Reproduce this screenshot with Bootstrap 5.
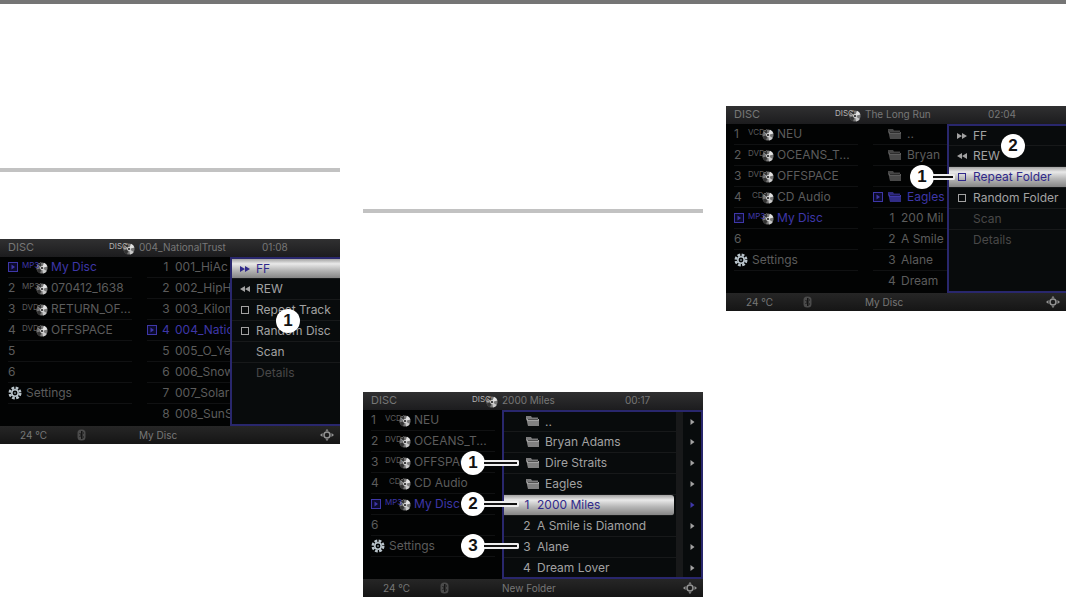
<!DOCTYPE html>
<html lang="en">
<head>
<meta charset="utf-8">
<meta name="viewport" content="width=device-width, initial-scale=1">
<title>Disc mode</title>
<link rel="stylesheet" href="https://cdn.jsdelivr.net/npm/bootstrap@5.3.0/dist/css/bootstrap.min.css">
<style>
body{background:#fff;font-family:Inter,"Liberation Sans",sans-serif;font-size:12px;line-height:20px}
.topbar{height:4px;background:#757575}
.sheet{display:grid;grid-template-columns:repeat(3,minmax(0,1fr));column-gap:23px;align-items:start}
.rule{height:4px;background:#c2c2c2;border:0;opacity:1;margin:0}
.c1{padding-top:164px}.c1 .rule{margin-bottom:67px}
.c2{padding-top:205px}.c2 .rule{margin-bottom:179px}
.c3{padding-top:102px}
.unit{background:#020303;color:#5c5c5c;position:relative}
.bar{display:grid;grid-template-columns:109px 30px 123px 1fr;height:18px;line-height:16px;font-size:11px;color:#777;background:linear-gradient(#303031,#1c1c1e)}
.foot{grid-template-columns:77px 62px 1fr 20px;background:linear-gradient(#262626,#151515);line-height:18px;font-size:10px;align-items:center}
.bar .ttl{font-size:10px}
.foot svg,.bar svg,.tracks svg{display:block}
.tracks{list-style:none;margin:0;padding:0}
.tracks li{height:21px;display:flex;align-items:center;white-space:nowrap;border-bottom:1px solid #101112}
.tracks li:last-child{border-bottom-color:transparent}
.left-list{flex:0 0 124px;margin:0 7px 0 8px}
.left-list .n{width:14px;flex:none}
.mid-list{flex:1;min-width:0;overflow:hidden;margin-left:8px}
.mid-list .p{width:11px;flex:none}.mid-list .n{width:16px;flex:none;text-align:center}
.mid-list .t{padding-left:1px}
.mid-list .dir .n{width:22px;padding-left:4px}
.on{color:#3e37a8}
.kind{font-size:8px;width:14px;flex:none;line-height:8px;padding-bottom:5px;position:relative;z-index:1}
.bar .kind{color:#b4b4b4}
.kind.cd{padding-left:4px}
.kind + svg{margin:2px 3px 0 0;flex:none}
.panel{border:solid #29276d;border-width:2px 0 2px 2px;background:#080b0c;color:#a2a2a2;height:169px;flex:none}
.panel.w1{width:110px}.panel.w3{width:119px}
.panel li{padding-left:8px;border-bottom-color:#17191a}
.panel li:first-child{height:20px}.panel li:last-child{border-color:transparent}
.panel button,.panel label{display:flex;align-items:center;border:0;padding:0;background:none;color:inherit;white-space:nowrap}
.panel li>button>svg,.gap16{width:10px;margin:0 6px 0 0;flex:none}
.panel input{appearance:none;width:8px;height:8px;border:1px solid;color:inherit;margin:0 7px 0 1px;background:none;flex:none}
.panel li.hot{background:linear-gradient(#a2a2a2,#e9e9e9 25%,#b5b5b5 60%,#858585);color:#30298a}
.panel li.off{color:#484848}
.browser{flex:1;min-width:0;border-right-width:2px;display:flex}
.browser .tracks{flex:1;min-width:0}
.browser .tracks li{padding-left:13px}
.browser .n{width:20px;text-align:center}
.browser .tracks .dir{padding-left:22px}.browser .dir svg{margin-right:6px}
.browser .hot{border-radius:0 3px 3px 0;margin-right:2px}
.browser .tracks.more{flex:0 0 25px;border-left:7px solid #18191a}
.browser .tracks.more li{padding:0;justify-content:center;border-color:transparent}
.tag{position:absolute;display:flex;align-items:center;height:24px}
.tag b{width:24px;height:24px;border-radius:50%;background:#fff;color:#111;font:bold 17px/24px "Liberation Sans",sans-serif;text-align:center}
.tag i{height:6px;background:#111;border:solid #eee;border-width:2px 2px 2px 0;border-radius:0 2px 2px 0;width:35px;margin-left:-1px}
.tag i.short-line{width:22px}
</style>
</head>
<body>
<svg width="0" height="0" class="position-absolute" aria-hidden="true">
<defs>
<symbol id="disc" viewBox="0 0 12 12"><circle cx="6" cy="6" r="5.6" fill="#777"/><path d="M6 6L1.2 3A5.6 5.6 0 0 1 5 .5zM6 6l4.8 3A5.6 5.6 0 0 1 7 11.500z" fill="#c9c9c9"/><path d="M6 6L.6 7.500A5.600 5.600 0 0 0 4 11.200zM6 6L1.500 2.500 5 .5z" fill="#333"/><path d="M6 6l5.400-1.500A5.600 5.600 0 0 0 8 .8z" fill="#e2e2e2"/><circle cx="6" cy="6" r="1.900" fill="#ddd"/><circle cx="6" cy="6" r="1" fill="#111"/></symbol>
<symbol id="play" viewBox="0 0 10 10"><rect x=".5" y=".5" width="9" height="9" fill="#0c0b2b" stroke="currentColor"/><path d="M3.500 2.500v5L7 5z" fill="currentColor"/></symbol>
<symbol id="folder" viewBox="0 0 13 11"><path d="M0 0h5l1 1.500h6v2H0z" fill="currentColor" opacity=".75"/><path d="M1 3h12v7H2L0 1z" fill="currentColor"/><path d="M2 3.500h10" stroke="#000" opacity=".5"/><path d="M2 10L1 5h12v5z" fill="#000" opacity=".2"/></symbol>
<symbol id="gear" viewBox="0 0 14 14"><circle cx="7" cy="7" r="5.200" fill="none" stroke="#b9c4cb" stroke-width="2.600" stroke-dasharray="2.700 1.384"/><circle cx="7" cy="7" r="3.200" fill="none" stroke="#b9c4cb" stroke-width="1.600"/><circle cx="7" cy="7" r="1" fill="#75828a"/></symbol>
<symbol id="ff" viewBox="0 0 10 10"><path d="M0 2v6L5 5zM5 2v6L10 5z" fill="currentColor"/></symbol>
<symbol id="rew" viewBox="0 0 10 10"><path d="M10 2v6L5 5zM5 2v6L0 5z" fill="currentColor"/></symbol>
<symbol id="next" viewBox="0 0 5 8"><path d="M.5 1v6L4.500 4z" fill="currentColor"/></symbol>
<symbol id="bt" viewBox="0 0 9 12"><rect x=".5" y=".5" width="8" height="11" rx="3.500" fill="#4b4b4b"/><path d="M2.500 4l4 4-2 2V2l2 2-4 4" fill="none" stroke="#151515"/></symbol>
<symbol id="joy" viewBox="0 0 14 12"><circle cx="7" cy="6" r="3" fill="none" stroke="#959595" stroke-width="1.500"/><path d="M5.500 1.800L7 0l1.500 1.800zM5.500 10.200L7 12l1.500-1.800zM2.500 4v4L0 6zM11.500 4v4L14 6z" fill="#959595"/></symbol>
</defs></svg>
<header class="topbar"></header>
<main class="sheet">
<section class="c1"><hr class="rule">
<div class="unit">
<div class="bar"><span class="ps-2">DISC</span><span class="d-flex align-items-center"><span class="kind">DISC</span><svg width="12" height="12"><use href="#disc"/></svg></span><span class="ttl">004_NationalTrust</span><span class="ttl">01:08</span></div>
<div class="d-flex">
<ul class="tracks left-list">
<li class="on"><span class="n"><svg width="10" height="10"><use href="#play"/></svg></span><span class="kind">MP3</span><svg width="12" height="12"><use href="#disc"/></svg>My Disc</li>
<li><span class="n">2</span><span class="kind">MP3</span><svg width="12" height="12"><use href="#disc"/></svg>070412_1638</li>
<li><span class="n">3</span><span class="kind">DVD</span><svg width="12" height="12"><use href="#disc"/></svg>RETURN_OF...</li>
<li><span class="n">4</span><span class="kind">DVD</span><svg width="12" height="12"><use href="#disc"/></svg>OFFSPACE</li>
<li><span class="n">5</span></li><li><span class="n">6</span></li>
<li><svg class="me-1" width="14" height="14"><use href="#gear"/></svg>Settings</li><li></li>
</ul>
<ul class="tracks mid-list">
<li><span class="p"></span><span class="n">1</span><span class="t">001_HiAc</span></li>
<li><span class="p"></span><span class="n">2</span><span class="t">002_HipH</span></li>
<li><span class="p"></span><span class="n">3</span><span class="t">003_Kilom</span></li>
<li class="on"><span class="p"><svg width="10" height="10"><use href="#play"/></svg></span><span class="n">4</span><span class="t">004_Natio</span></li>
<li><span class="p"></span><span class="n">5</span><span class="t">005_O_Ye</span></li>
<li><span class="p"></span><span class="n">6</span><span class="t">006_Snow</span></li>
<li><span class="p"></span><span class="n">7</span><span class="t">007_Solar</span></li>
<li><span class="p"></span><span class="n">8</span><span class="t">008_SunS</span></li>
</ul>
<div class="panel w1"><ul class="tracks">
<li class="hot"><button type="button"><svg width="10" height="10"><use href="#ff"/></svg>FF</button></li>
<li><button type="button"><svg width="10" height="10"><use href="#rew"/></svg>REW</button></li>
<li><label><input type="checkbox">Repeat Track</label></li>
<li><label><input type="checkbox">Random Disc</label></li>
<li><button type="button"><span class="gap16"></span>Scan</button></li>
<li class="off"><button type="button"><span class="gap16"></span>Details</button></li>
</ul></div>
</div>
<div class="bar foot"><span class="ps-3 ms-1">24 ℃</span><svg width="9" height="12"><use href="#bt"/></svg><span>My Disc</span><svg width="14" height="12"><use href="#joy"/></svg></div>
<div class="tag" style="left:276px;top:70px"><b>1</b></div>
</div>
</section>
<section class="c2"><hr class="rule">
<div class="unit">
<div class="bar"><span class="ps-2">DISC</span><span class="d-flex align-items-center"><span class="kind">DISC</span><svg width="12" height="12"><use href="#disc"/></svg></span><span class="ttl">2000 Miles</span><span class="ttl">00:17</span></div>
<div class="d-flex">
<ul class="tracks left-list">
<li><span class="n">1</span><span class="kind">VCD</span><svg width="12" height="12"><use href="#disc"/></svg>NEU</li>
<li><span class="n">2</span><span class="kind">DVD</span><svg width="12" height="12"><use href="#disc"/></svg>OCEANS_T...</li>
<li><span class="n">3</span><span class="kind">DVD</span><svg width="12" height="12"><use href="#disc"/></svg>OFFSPAC</li>
<li><span class="n">4</span><span class="kind cd">CD</span><svg width="12" height="12"><use href="#disc"/></svg>CD Audio</li>
<li class="on"><span class="n"><svg width="10" height="10"><use href="#play"/></svg></span><span class="kind">MP3</span><svg width="12" height="12"><use href="#disc"/></svg>My Disc</li>
<li><span class="n">6</span></li>
<li><svg class="me-1" width="14" height="14"><use href="#gear"/></svg>Settings</li><li></li>
</ul>
<div class="panel browser">
<ul class="tracks">
<li class="dir"><svg width="13" height="11"><use href="#folder"/></svg>..</li>
<li class="dir"><svg width="13" height="11"><use href="#folder"/></svg>Bryan Adams</li>
<li class="dir"><svg width="13" height="11"><use href="#folder"/></svg>Dire Straits</li>
<li class="dir"><svg width="13" height="11"><use href="#folder"/></svg>Eagles</li>
<li class="hot"><span class="n">1</span>2000 Miles</li>
<li><span class="n">2</span>A Smile is Diamond</li>
<li><span class="n">3</span>Alane</li>
<li><span class="n">4</span>Dream Lover</li>
</ul>
<ul class="tracks more">
<li><svg width="5" height="8"><use href="#next"/></svg></li><li><svg width="5" height="8"><use href="#next"/></svg></li><li><svg width="5" height="8"><use href="#next"/></svg></li><li><svg width="5" height="8"><use href="#next"/></svg></li><li class="on"><svg width="5" height="8"><use href="#next"/></svg></li><li><svg width="5" height="8"><use href="#next"/></svg></li><li><svg width="5" height="8"><use href="#next"/></svg></li><li><svg width="5" height="8"><use href="#next"/></svg></li>
</ul>
</div>
</div>
<div class="bar foot"><span class="ps-3 ms-1">24 ℃</span><svg width="9" height="12"><use href="#bt"/></svg><span>New Folder</span><svg width="14" height="12"><use href="#joy"/></svg></div>
<div class="tag" style="left:98px;top:59px"><b>1</b><i></i></div>
<div class="tag" style="left:98px;top:100px"><b>2</b><i></i></div>
<div class="tag" style="left:98px;top:142px"><b>3</b><i></i></div>
</div>
</section>
<section class="c3">
<div class="unit">
<div class="bar"><span class="ps-2">DISC</span><span class="d-flex align-items-center"><span class="kind">DISC</span><svg width="12" height="12"><use href="#disc"/></svg></span><span class="ttl">The Long Run</span><span class="ttl">02:04</span></div>
<div class="d-flex">
<ul class="tracks left-list">
<li><span class="n">1</span><span class="kind">VCD</span><svg width="12" height="12"><use href="#disc"/></svg>NEU</li>
<li><span class="n">2</span><span class="kind">DVD</span><svg width="12" height="12"><use href="#disc"/></svg>OCEANS_T...</li>
<li><span class="n">3</span><span class="kind">DVD</span><svg width="12" height="12"><use href="#disc"/></svg>OFFSPACE</li>
<li><span class="n">4</span><span class="kind cd">CD</span><svg width="12" height="12"><use href="#disc"/></svg>CD Audio</li>
<li class="on"><span class="n"><svg width="10" height="10"><use href="#play"/></svg></span><span class="kind">MP3</span><svg width="12" height="12"><use href="#disc"/></svg>My Disc</li>
<li><span class="n">6</span></li>
<li><svg class="me-1" width="14" height="14"><use href="#gear"/></svg>Settings</li><li></li>
</ul>
<ul class="tracks mid-list">
<li class="dir"><span class="p"></span><span class="n"><svg width="13" height="11"><use href="#folder"/></svg></span><span class="t">..</span></li>
<li class="dir"><span class="p"></span><span class="n"><svg width="13" height="11"><use href="#folder"/></svg></span><span class="t">Bryan</span></li>
<li class="dir"><span class="p"></span><span class="n"><svg width="13" height="11"><use href="#folder"/></svg></span></li>
<li class="dir on"><span class="p"><svg width="10" height="10"><use href="#play"/></svg></span><span class="n"><svg width="13" height="11"><use href="#folder"/></svg></span><span class="t">Eagles</span></li>
<li><span class="p"></span><span class="n">1</span><span class="t">200 Mil</span></li>
<li><span class="p"></span><span class="n">2</span><span class="t">A Smile</span></li>
<li><span class="p"></span><span class="n">3</span><span class="t">Alane</span></li>
<li><span class="p"></span><span class="n">4</span><span class="t">Dream</span></li>
</ul>
<div class="panel w3"><ul class="tracks">
<li><button type="button"><svg width="10" height="10"><use href="#ff"/></svg>FF</button></li>
<li><button type="button"><svg width="10" height="10"><use href="#rew"/></svg>REW</button></li>
<li class="hot"><label><input type="checkbox">Repeat Folder</label></li>
<li><label><input type="checkbox">Random Folder</label></li>
<li class="off"><button type="button"><span class="gap16"></span>Scan</button></li>
<li class="off"><button type="button"><span class="gap16"></span>Details</button></li>
</ul></div>
</div>
<div class="bar foot"><span class="ps-3 ms-1">24 ℃</span><svg width="9" height="12"><use href="#bt"/></svg><span>My Disc</span><svg width="14" height="12"><use href="#joy"/></svg></div>
<div class="tag" style="left:184px;top:59px"><b>1</b><i class="short-line"></i></div>
<div class="tag" style="left:275px;top:28px"><b>2</b></div>
</div>
</section>
</main>
<script src="https://cdn.jsdelivr.net/npm/bootstrap@5.3.0/dist/js/bootstrap.bundle.min.js"></script>
</body>
</html>
